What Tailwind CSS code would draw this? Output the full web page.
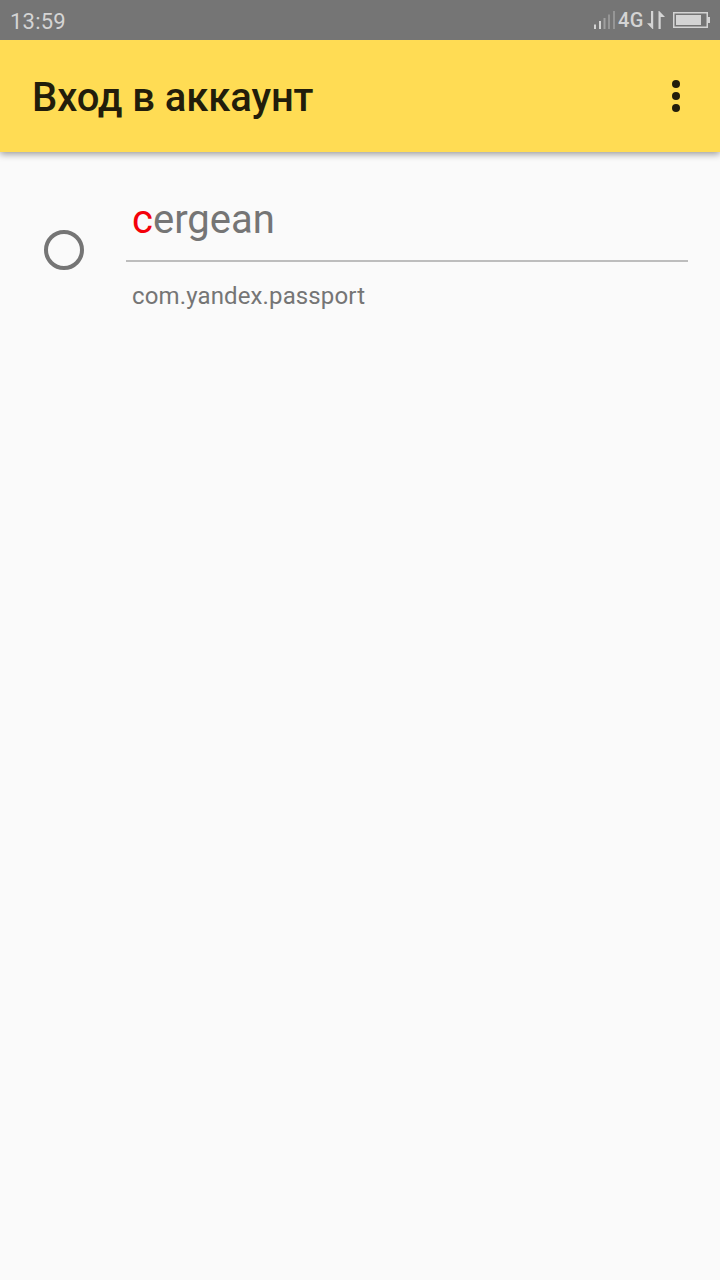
<!DOCTYPE html>
<html lang="ru">

<head>
    <meta charset="UTF-8">
    <meta name="viewport" content="width=device-width, initial-scale=1.0">
    <script src="https://cdn.jsdelivr.net/npm/@tailwindcss/browser@4"></script>
    <title>Вход в аккаунт</title>
</head>

<body class="min-h-screen bg-[#fafafa] font-[Roboto,sans-serif]">

    <!-- Status Bar -->
    <div class="relative z-10 flex h-10 items-center justify-between bg-[#757575] pl-2.5 pr-2.5 text-[#d4d4d4]">
        <span class="pt-[3px] text-[22px] leading-none tracking-[0.2px]">13:59</span>
        <div class="flex items-center">
            <svg class="h-5 w-[22px]" viewBox="0 0 22 20" fill="currentColor">
                <rect x="0" y="14.5" width="2" height="4.5" />
                <rect x="5" y="11" width="2" height="8" />
                <rect x="9.5" y="8" width="2" height="11" opacity=".45" />
                <rect x="14" y="4.5" width="2" height="14.5" opacity=".35" />
                <rect x="19" y="1" width="2" height="18" opacity=".35" />
            </svg>
            <span class="ml-0.5 w-[26px] text-[20px] font-medium leading-none tracking-[0.3px]">4G</span>
            <svg class="ml-[3px] h-5 w-[18px]" viewBox="0 0 18 20" fill="currentColor">
                <path d="M4 1h2.2v18h-.7L0 13.2h4z" />
                <path d="M11.5 19h2.2V7h4.3L12.2 1h-.7z" />
            </svg>
            <svg class="ml-2 h-4 w-[37px]" viewBox="0 0 37 16" fill="currentColor">
                <rect x=".75" y=".75" width="33.5" height="14.5" fill="none" stroke="currentColor" stroke-width="1.5" />
                <rect x="3" y="3" width="25" height="10" />
                <rect x="35" y="5" width="2" height="6" />
            </svg>
        </div>
    </div>

    <!-- App Bar -->
    <header class="flex h-28 items-center justify-between bg-[#ffdc54] pl-8 pr-10 text-[#221d0b] shadow-[0_2px_7px_rgba(0,0,0,0.4)]">
        <h1 class="pt-1 text-[40px] font-medium leading-[48px] tracking-[-0.1px]">Вход в аккаунт</h1>
        <button aria-label="Ещё">
            <svg class="block h-8 w-2" viewBox="0 0 8 32" fill="currentColor">
                <circle cx="4" cy="4" r="4" />
                <circle cx="4" cy="16" r="4" />
                <circle cx="4" cy="28" r="4" />
            </svg>
        </button>
    </header>

    <!-- Account List -->
    <main class="flex pl-11 pr-8 pt-11 text-[#757575]">
        <div class="mt-[34px] size-10 shrink-0 rounded-full border-4 border-[#757575]"></div>
        <div class="ml-[42px] flex-1">
            <div class="h-[66px] border-b-2 border-[#bdbdbd] pl-1.5 text-[40px] leading-[48px]"><span class="text-[#f4000a]">c</span>ergean</div>
            <p class="pl-1.5 pt-5 text-[24px] leading-7 tracking-[0.13px]">com.yandex.passport</p>
        </div>
    </main>

</body>

</html>
